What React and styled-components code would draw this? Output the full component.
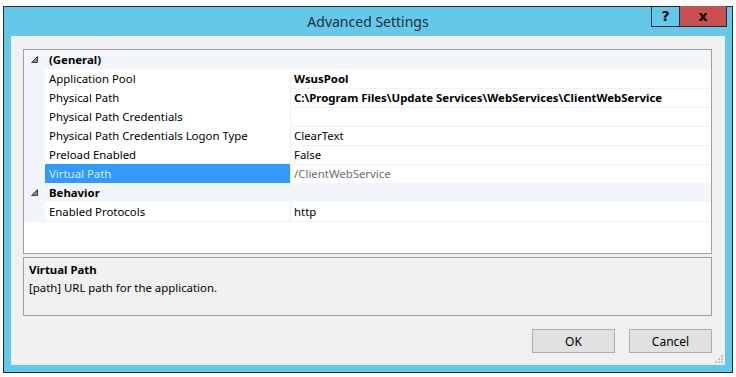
import styled, { createGlobalStyle } from 'styled-components';

const GlobalStyle = createGlobalStyle`
  body {
    margin: 0;
    background: #ffffff;
    font-family: 'Noto Sans', 'Segoe UI', sans-serif;
    font-size: 11.4px;
    color: #000;
  }
`;

const Page = styled.div`
  width: 736px;
  height: 377px;
  padding: 6px 3px 0 3px;
  box-sizing: border-box;
  overflow: hidden;
`;

const Window = styled.div`
  width: 730px;
  height: 367px;
  box-sizing: border-box;
  border: 1px solid #1c2c38;
  background: #65c8e8;
  padding: 0 7px 7px 7px;
  display: flex;
  flex-direction: column;
`;

const TitleBar = styled.div`
  height: 29px;
  display: grid;
  grid-template-columns: 1fr auto 1fr;
  align-items: center;
`;

const Title = styled.div`
  grid-column: 2;
  font-size: 14px;
  color: #1a2f3c;
`;

const Controls = styled.div`
  grid-column: 3;
  justify-self: end;
  align-self: start;
  display: flex;
  margin: -1px -2px 0 0;
  border: 1px solid #1c2c38;
  border-top: none;
`;

const CtlButton = styled.div`
  width: ${(p) => p.$w}px;
  height: 20px;
  display: flex;
  align-items: center;
  justify-content: center;
  background: ${(p) => (p.$close ? '#c75050' : 'transparent')};
  border-left: ${(p) => (p.$close ? '1px solid #1c2c38' : 'none')};
  font-family: 'DejaVu Sans', sans-serif;
  font-weight: bold;
  font-size: 14px;
  color: #000;
`;

const Client = styled.div`
  flex: 1;
  position: relative;
  background: #f0f0f0;
  padding: 13px 13px 0 12px;
  display: flex;
  flex-direction: column;
`;

const Grid = styled.div`
  height: 205px;
  box-sizing: border-box;
  border: 1px solid #a0a0a0;
  background: #fff;
`;

const Row = styled.div`
  display: grid;
  grid-template-columns: 21px 245px 1fr;
  height: 19px;
`;

const Gutter = styled.div`
  background: #f2f5f9;
  display: flex;
  align-items: center;
  justify-content: center;
`;

const CategoryCell = styled.div`
  grid-column: 2 / 4;
  background: #f2f5f9;
  font-weight: bold;
  padding-left: 4px;
  line-height: 19px;
`;

const NameCell = styled.div`
  box-sizing: border-box;
  border-bottom: 1px solid #f0f0f0;
  padding-left: 4px;
  line-height: 19px;
  white-space: nowrap;
  background: ${(p) => (p.$selected ? '#3399ff' : '#fff')};
  color: ${(p) => (p.$selected ? '#d6e8fb' : '#000')};
`;

const ValueCell = styled.div`
  box-sizing: border-box;
  border-bottom: 1px solid #f0f0f0;
  border-left: 1px solid #f0f0f0;
  padding-left: 3px;
  line-height: 19px;
  white-space: nowrap;
  font-weight: ${(p) => (p.$bold ? 'bold' : 'normal')};
  color: ${(p) => (p.$muted ? '#6d6d6d' : '#000')};
`;

const Description = styled.div`
  margin-top: 3px;
  height: 59px;
  box-sizing: border-box;
  border: 1px solid #a0a0a0;
  padding: 3px 5px;
  line-height: 18px;
`;

const DescTitle = styled.div`
  font-weight: bold;
`;

const Footer = styled.div`
  display: flex;
  justify-content: flex-end;
  gap: 14px;
  margin-top: 13px;
`;

const Button = styled.div`
  width: 83px;
  height: 24px;
  box-sizing: border-box;
  border: 1px solid #adadad;
  background: #e1e1e1;
  display: flex;
  align-items: center;
  justify-content: center;
  font-size: 12px;
`;

const Grip = styled.svg`
  position: absolute;
  right: 2px;
  bottom: 2px;
`;

const Expander = () => (
  <svg width="7" height="7" viewBox="0 0 7 7">
    <polygon points="0.5,6.5 6.5,6.5 6.5,0.5" fill="#8a8a8a" stroke="#404040" strokeWidth="1" />
  </svg>
);

const groups = [
  {
    name: '(General)',
    props: [
      { name: 'Application Pool', value: 'WsusPool', bold: true },
      { name: 'Physical Path', value: 'C:\\Program Files\\Update Services\\WebServices\\ClientWebService', bold: true },
      { name: 'Physical Path Credentials', value: '' },
      { name: 'Physical Path Credentials Logon Type', value: 'ClearText' },
      { name: 'Preload Enabled', value: 'False' },
      { name: 'Virtual Path', value: '/ClientWebService', muted: true, selected: true },
    ],
  },
  {
    name: 'Behavior',
    props: [{ name: 'Enabled Protocols', value: 'http' }],
  },
];

const App = () => (
  <>
    <GlobalStyle />
    <Page>
      <Window>
        <TitleBar>
          <Title>Advanced Settings</Title>
          <Controls>
            <CtlButton $w={27}>?</CtlButton>
            <CtlButton $w={46} $close>x</CtlButton>
          </Controls>
        </TitleBar>
        <Client>
          <Grid>
            {groups.map((g) => (
              <div key={g.name}>
                <Row>
                  <Gutter><Expander /></Gutter>
                  <CategoryCell>{g.name}</CategoryCell>
                </Row>
                {g.props.map((p) => (
                  <Row key={p.name}>
                    <Gutter />
                    <NameCell $selected={p.selected}>{p.name}</NameCell>
                    <ValueCell $bold={p.bold} $muted={p.muted}>{p.value}</ValueCell>
                  </Row>
                ))}
              </div>
            ))}
          </Grid>
          <Description>
            <DescTitle>Virtual Path</DescTitle>
            <div>[path] URL path for the application.</div>
          </Description>
          <Footer>
            <Button>OK</Button>
            <Button>Cancel</Button>
          </Footer>
          <Grip width="8" height="8" viewBox="0 0 8 8">
            {[[6, 0], [6, 3], [3, 3], [6, 6], [3, 6], [0, 6]].map(([x, y]) => (
              <rect key={`${x}-${y}`} x={x} y={y} width="2" height="2" fill="#c4c4c4" />
            ))}
          </Grip>
        </Client>
      </Window>
    </Page>
  </>
);

export default App;
